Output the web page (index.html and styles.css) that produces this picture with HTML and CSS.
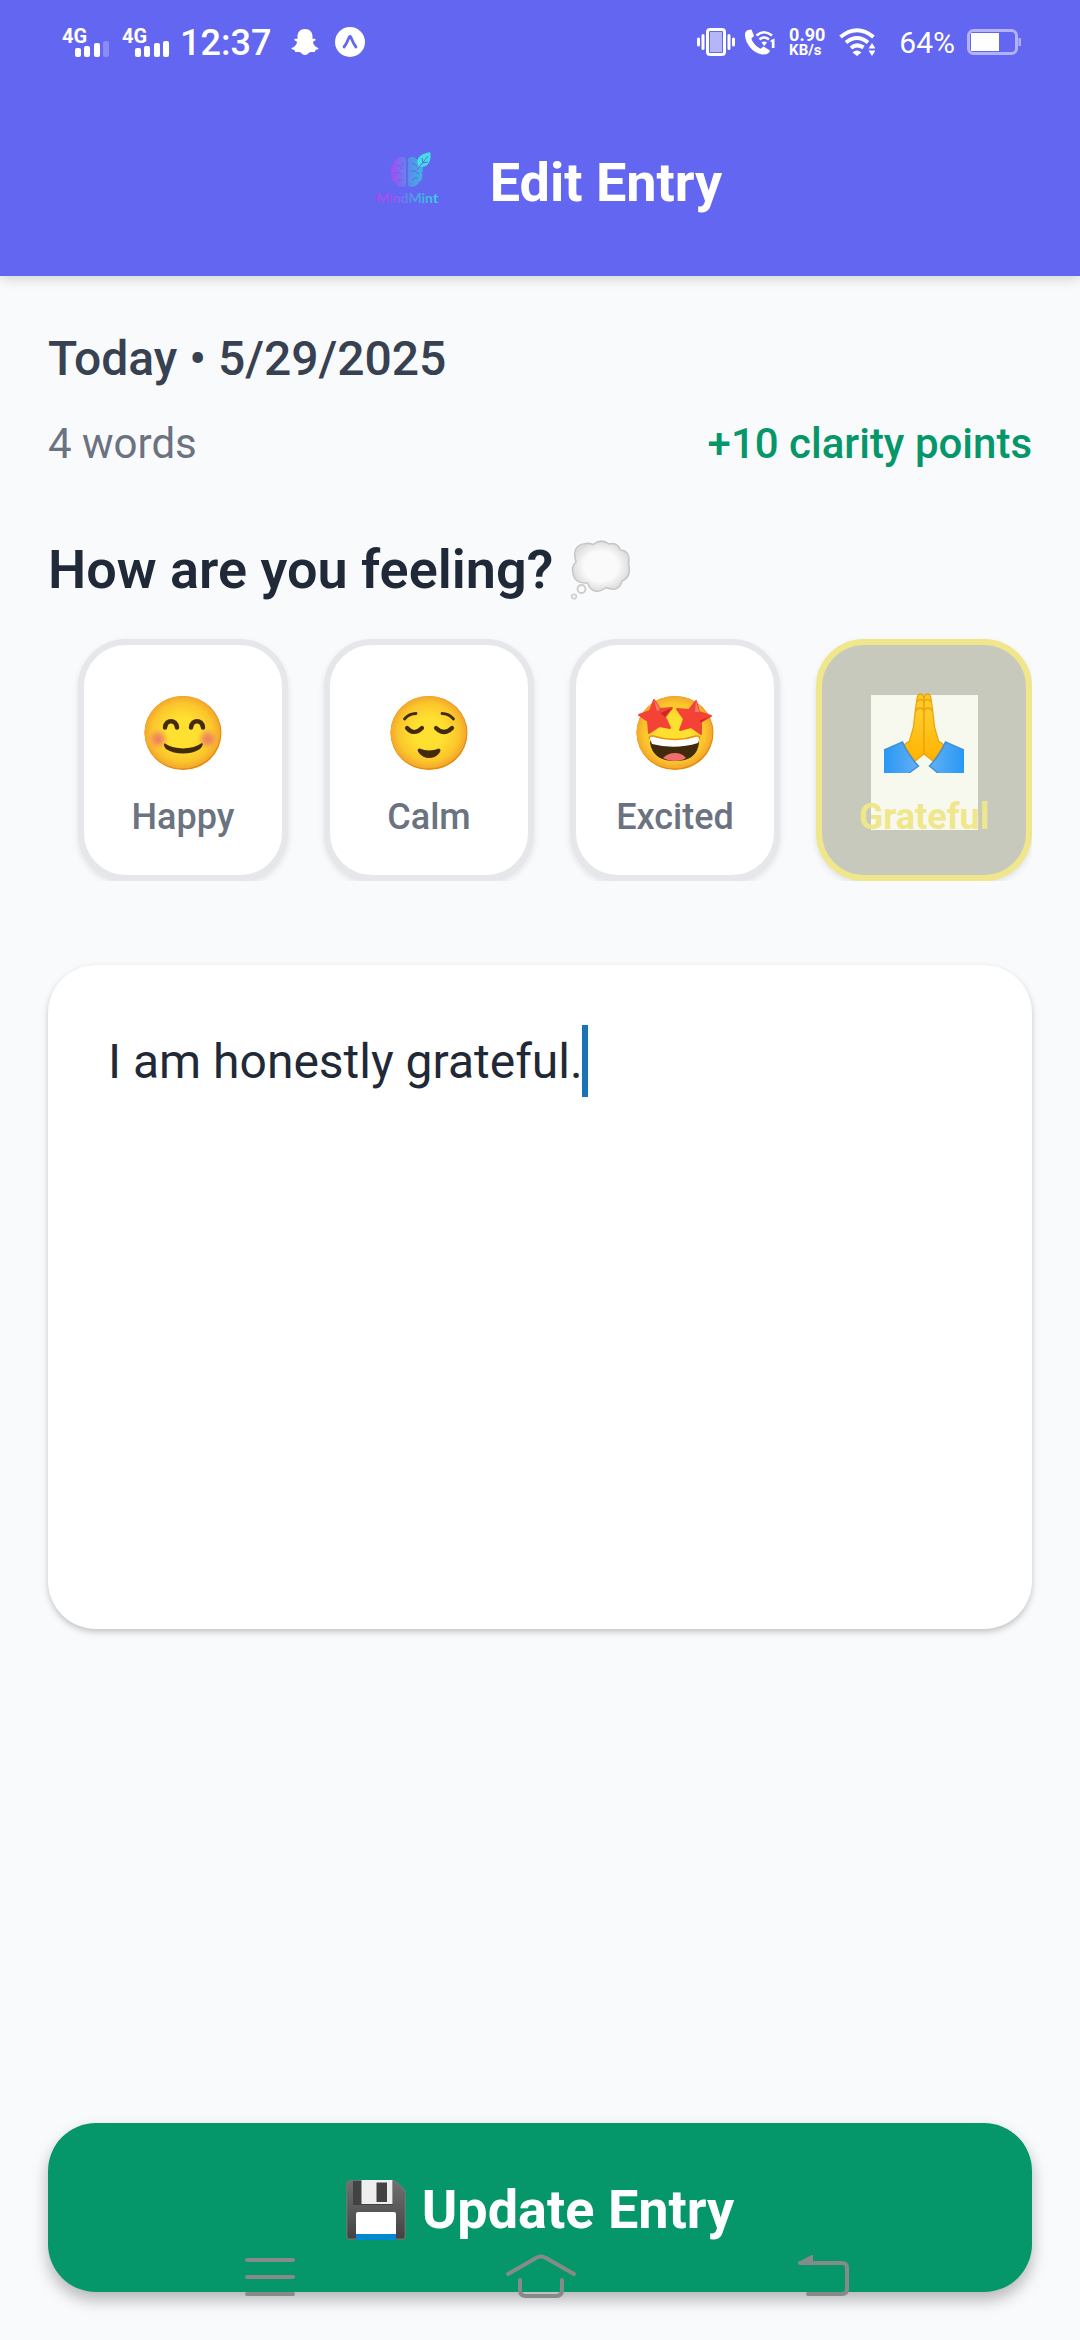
FILE: index.html
```html
<!DOCTYPE html>
<html lang="en">
<head>
<meta charset="utf-8">
<meta name="viewport" content="width=device-width, initial-scale=1">
<title>Edit Entry</title>
<link rel="stylesheet" href="styles.css">
</head>
<body>
<header class="header">
  <div class="status">
    <div class="status-group">
      <div class="signal">
        <span class="signal-label">4G</span>
        <svg class="signal-bars" viewBox="0 0 34 16" aria-hidden="true"><g fill="#fff"><rect x="0" y="7" width="6" height="9" rx="2"/><rect x="9" y="5" width="6" height="11" rx="2"/><rect x="19" y="2" width="6" height="14" rx="2"/><rect x="28" y="0" width="6" height="16" rx="2" opacity=".25"/></g></svg>
      </div>
      <div class="signal">
        <span class="signal-label">4G</span>
        <svg class="signal-bars" viewBox="0 0 34 16" aria-hidden="true"><g fill="#fff"><rect x="0" y="7" width="6" height="9" rx="2"/><rect x="9" y="5" width="6" height="11" rx="2"/><rect x="19" y="2" width="6" height="14" rx="2"/><rect x="28" y="0" width="6" height="16" rx="2"/></g></svg>
      </div>
      <span class="clock">12:37</span>
      <svg class="icon-snap" viewBox="0 0 28 28" aria-hidden="true"><path fill="#fff" d="M14 1C9 1 6.500 4.500 6.500 8.500V11C5.500 11 4 10.500 3.500 11.200 3 12.300 5 13 6 13.700 6 16.500 3.500 19 .8 20 0 20.500.5 21.200 3.500 22L4.200 24C6 24 8 23.600 9.500 24.500 11 25.500 12 27 14 27s3-1.500 4.500-2.500C20 23.600 22 24 23.800 24L24.500 22C27.500 21.200 28 20.500 27.200 20 24.500 19 22 16.500 22 13.700 23 13 25 12.300 24.500 11.200 24 10.500 22.500 11 21.500 11V8.500C21.500 4.500 19 1 14 1Z"/></svg>
      <svg class="icon-app" viewBox="0 0 30 30" aria-hidden="true"><circle cx="15" cy="15" r="15" fill="#fff"/><path d="M9 20C11.500 17 13 13 14 10.500Q15 8.500 16 10.500C17 13 18.500 17 21 20" fill="none" stroke="#6366f1" stroke-width="2.800" stroke-linecap="round"/></svg>
    </div>
    <div class="status-group">
      <svg class="icon-vibrate" viewBox="0 0 38 28" aria-hidden="true"><rect x="10.500" y="1.500" width="17" height="25" rx="2.500" fill="#6366f1" stroke="#fff" stroke-width="3"/><rect x="13" y="4" width="12" height="20" fill="#b5b6f8"/><path d="M1.500 11v6M6 7.500v13M32 7.500v13M36.500 11v6" stroke="#fff" stroke-width="3" stroke-linecap="round"/></svg>
      <svg class="icon-call" viewBox="0 0 30 26" aria-hidden="true"><path fill="#fff" d="M3 1 6.500.5 9 7 6.300 9.500C8 14 11 17.500 15.500 19.800L18.500 17.500 25 21.500C24.500 24 22 25.500 19 25.500 9 25.500 0 15 0 5.500 0 3 1.500 1.500 3 1Z"/><path d="M11.500 6.500Q19 0 27 6.500M14.500 10.500Q19 6.500 24 10.500" fill="none" stroke="#fff" stroke-width="2.600"/><path d="M16.500 13.500Q19 11.500 22 13.500L19.200 17ZM26 11 29.500 9.500V19H26.800V12.500L25 13Z" fill="#fff"/></svg>
      <div class="speed"><span class="speed-value">0.90</span><span class="speed-unit">KB/s</span></div>
      <svg class="icon-wifi" viewBox="0 0 36 28" aria-hidden="true"><path d="M1.500 9Q18-4.500 34.500 9M7 14.500Q18 5.500 29 14.500M12 20Q18 15 24.500 19.500" fill="none" stroke="#fff" stroke-width="4"/><path d="M13.500 24.500Q18 20.500 22.500 24.500L18 28ZM29.500 20.500 33 15l3.500 5.500ZM29.500 22.500H36.500L33 28Z" fill="#fff"/></svg>
      <span class="percent">64%</span>
      <svg class="icon-battery" viewBox="0 0 54 26" aria-hidden="true"><rect x="1.500" y="1.500" width="48" height="23" rx="5" fill="none" stroke="#b1b2f8" stroke-width="3"/><rect x="4" y="4" width="28" height="18" fill="#fff"/><path d="M51.500 9h1.500q1 0 1 1v6q0 1-1 1h-1.500Z" fill="#b1b2f8"/></svg>
    </div>
  </div>
  <div class="title-row">
    <svg class="logo" viewBox="0 0 90 64" role="img" aria-label="MindMint">
      <defs><linearGradient id="mint" gradientUnits="userSpaceOnUse" x1="14" y1="0" x2="76" y2="0"><stop offset="0" stop-color="#a94be8"/><stop offset=".3" stop-color="#9a55f5"/><stop offset=".52" stop-color="#5b8ce8"/><stop offset=".75" stop-color="#3fb3e0"/><stop offset="1" stop-color="#41d3e0"/></linearGradient></defs>
      <path fill="url(#mint)" d="M44 8C42 5 37 5 36 8 32 8 31 11 32 13 28 15 28 20 30 22 28 26 30 30 33 31 34 35 42 38 44 34ZM46 8C48 5 53 5 54 8 58 8 59 11 58 13 62 15 61 20 60 22 61 26 60 30 57 31 56 35 48 38 46 34Z"/>
      <path d="M35 14q4 0 4 4M32 22q5-2 8 2M35 30q3-3 6 0M41 11v4M50 12q4 1 5 4M49 20q5-1 8 3M50 29q3-3 6-2" fill="none" stroke="#6366f1" stroke-width="1"/>
      <path fill="#44dfe3" d="M57 16C52 6 60 3 68 1 70 8 67 17 58 16Z"/>
      <path d="M55 19 66 5M60 7l1 5M66 11l-6 1" fill="none" stroke="#6366f1" stroke-width="1"/>
      <text class="logo-text" x="14" y="52" fill="url(#mint)">MindMint</text>
    </svg>
    <h1 class="title">Edit Entry</h1>
  </div>
</header>

<main class="content">
  <h2 class="date">Today • 5/29/2025</h2>
  <div class="stats">
    <span>4 words</span>
    <span class="points">+10 clarity points</span>
  </div>

  <h2 class="question">How are you feeling?
    <svg class="bubble" viewBox="0 0 60 60" aria-hidden="true"><defs><radialGradient id="cloud"><stop offset=".6" stop-color="#fafafa"/><stop offset="1" stop-color="#dedede"/></radialGradient></defs><path d="M22 4.500Q30-2 38 4Q46 1.500 49.500 10Q60 11 57.500 24Q61 37 51 41Q48 53 35 47.500Q22 57 16.500 43Q2 44 1.500 30Q1.500 25 5 22Q0 5 15 3.500Q19 3 22 4.500Z" fill="url(#cloud)" stroke="#c6c6c6" stroke-width="1.500"/><circle cx="10.500" cy="49" r="4" fill="#fafafa" stroke="#ccc" stroke-width="1.800"/><circle cx="3" cy="56.500" r="2.300" fill="#fafafa" stroke="#ccc" stroke-width="1.600"/></svg>
  </h2>

  <svg class="defs" aria-hidden="true"><defs>
    <radialGradient id="face" cx=".5" cy=".5" r=".5"><stop offset=".4" stop-color="#ffe030"/><stop offset=".8" stop-color="#fbc62c"/><stop offset="1" stop-color="#f3a72b"/></radialGradient>
    <radialGradient id="blush"><stop offset="0" stop-color="#ef7d62"/><stop offset=".4" stop-color="#f08c5c" stop-opacity=".85"/><stop offset="1" stop-color="#f7a94a" stop-opacity="0"/></radialGradient>
  </defs></svg>
  <div class="moods" role="group" aria-label="Mood">
    <button class="mood" type="button" aria-pressed="false">
      <svg class="emoji" viewBox="0 0 80 80" aria-hidden="true"><ellipse cx="40" cy="40" rx="38.500" ry="37" fill="#e68a0c"/><ellipse cx="39.500" cy="39.300" rx="38" ry="36.300" fill="url(#face)"/><circle cx="15" cy="46" r="11" fill="url(#blush)"/><circle cx="65" cy="46" r="11" fill="url(#blush)"/><path d="M22 34.500C23 26 33 26 34 34.500M48 34.500C49 26 59 26 60 34.500" fill="none" stroke="#422b0d" stroke-width="4.500" stroke-linecap="round"/><path d="M22 50.500C32 57 48 57 58 50.500 61 49.500 60 53 57 56 48 62 32 62 23 56 20 52 21 50 22 50.500Z" fill="#422b0d"/></svg>
      <span>Happy</span>
    </button>
    <button class="mood" type="button" aria-pressed="false">
      <svg class="emoji" viewBox="0 0 80 80" aria-hidden="true"><ellipse cx="40" cy="40" rx="38.500" ry="37" fill="#e68a0c"/><ellipse cx="39.500" cy="39.300" rx="38" ry="36.300" fill="url(#face)"/><path d="M15.500 26Q20 20.500 27 20.500M53 20.500Q60 20.500 64.500 26" fill="none" stroke="#422b0d" stroke-width="2.800" stroke-linecap="round"/><path d="M18 35Q25 43 33 35M47 35Q55 43 63 35" fill="none" stroke="#422b0d" stroke-width="4.200" stroke-linecap="round"/><path d="M30.500 55.500Q40 59.500 50 55.500 53 56.500 50 60.500 46 65 40 65 34 65 30 60 27 56 30.500 55.500Z" fill="#422b0d"/></svg>
      <span>Calm</span>
    </button>
    <button class="mood" type="button" aria-pressed="false">
      <svg class="emoji" viewBox="0 0 80 80" aria-hidden="true"><ellipse cx="40" cy="40" rx="38.500" ry="37" fill="#e68a0c"/><ellipse cx="39.500" cy="39.300" rx="38" ry="36.300" fill="url(#face)"/><path d="M16 45.500Q40 52 63 45.500L64 50Q62 68 40 68 18 68 15 50Z" fill="#422b0d"/><path d="M15 46Q14 43 18 43.500 40 51 61 43.500 65 43 64 47L63 50Q40 57 17 51Z" fill="#fff"/><path d="M28 65Q33 60 40 60T51 65Q47 68 40 68T28 65Z" fill="#ee6f6b"/><path d="M14.500 46Q13.500 42.500 18 43 40 50 61 43 65.500 42.500 64.500 46.500" fill="none" stroke="#e89218" stroke-width="1.500"/><path d="M19 7 25 16 37 15 30 24 35 35 24.500 33 14 40 13 28 4 22 15 18ZM61 8 64 19 76 23 66 29 66 41 56 34 45 37 49 26 42 16 54 17Z" fill="#f44336" stroke="#f44336" stroke-width="2" stroke-linejoin="round"/><path d="M37 15 25.500 20 30 24ZM76 23 64 28 66 29Z" fill="#c62828"/><path d="M19 7 25 16 22 18ZM61 8 64 19 60 19Z" fill="#f9806f"/></svg>
      <span>Excited</span>
    </button>
    <button class="mood mood-selected" type="button" aria-pressed="true">
      <svg class="emoji" viewBox="0 0 80 80" aria-hidden="true"><defs><linearGradient id="hand" x1="0" y1="0" x2="0" y2="1"><stop offset=".3" stop-color="#ffca28"/><stop offset="1" stop-color="#ffb300"/></linearGradient><linearGradient id="cuff"><stop offset="0" stop-color="#2898f5"/><stop offset="1" stop-color="#64b0f5"/></linearGradient><linearGradient id="cuff2"><stop offset="0" stop-color="#64b0f5"/><stop offset="1" stop-color="#2898f5"/></linearGradient></defs><g fill="url(#hand)" stroke="#eaa50b" stroke-width="1.300"><path d="M40 5Q39 1 36.500 1 33.500 1 33 6L31.500 16 29.500 34 25.500 48 20 52 31 68 40 61Z"/><path d="M40 5Q41 1 43.500 1 46.500 1 47 6L48.500 16 50.500 34 54.500 48 60 52 49 68 40 61Z"/><path d="M33 9q1-2.500 3.500-2.500T40 9q1-2.500 3.500-2.500T47 9M32 18q1-3 4-3t4 3q1-3 4-3t4 3" fill="none"/></g><path d="M0 57 18.500 49Q24 62 34.500 73L25 80H0Z" fill="url(#cuff)"/><path d="M80 57 61.500 49Q56 62 45.500 73L54 80H80Z" fill="url(#cuff2)"/><path d="M0 57 18.500 49Q24 62 34.500 73L25 80M80 57 61.500 49Q56 62 45.500 73L54 80" fill="none" stroke="#3e8fd6" stroke-width="1.500"/></svg>
      <span>Grateful</span>
    </button>
  </div>

  <div class="editor">
    <textarea class="entry" aria-label="Journal entry">I am honestly grateful.</textarea>
    <span class="cursor"></span>
  </div>

  <button class="update" type="button">
    <svg class="floppy" viewBox="0 0 60 60" aria-hidden="true"><defs><linearGradient id="disk" x1="0" y1="0" x2="0" y2="1"><stop offset="0" stop-color="#707070"/><stop offset="1" stop-color="#424242"/></linearGradient></defs><path d="M4 .8H49L59.200 11V56Q59.200 59.200 56 59.200H4Q.8 59.200.8 56V4Q.8.8 4 .8Z" fill="url(#disk)" stroke="#757575" stroke-width="1.200"/><path d="M7 1H47V25H7Z" fill="#424242"/><path d="M15.500 0H46.500V24H15.500Z" fill="#eee"/><path d="M30.500 2.500H41V22H30.500Z" fill="#424242"/><path d="M10 34Q10 32 12 32H48Q50 32 50 34V54H10Z" fill="#fff"/><path d="M10 54H50V60H10Z" fill="#0288d1"/></svg>
    <span>Update Entry</span>
  </button>
</main>

<nav class="navbar" aria-label="System">
  <button class="nav-key" type="button" aria-label="Recent apps"><svg viewBox="0 0 80 48"><path d="M17 9H63M17 26H63M17 43H63"/></svg></button>
  <button class="nav-key" type="button" aria-label="Home"><svg viewBox="0 0 80 48"><path d="M8 23 36 7Q41 4 46 7L74 23M20 29V39Q20 45 26 45H56Q62 45 62 39V29"/></svg></button>
  <button class="nav-key" type="button" aria-label="Back"><svg viewBox="0 0 80 48"><path d="M30 12H72Q77 12 77 17V38Q77 43 72 43H38"/><path class="nav-fill" d="M29 12 42 5V12Z"/></svg></button>
</nav>
</body>
</html>
```
FILE: styles.css
```css
* {
  box-sizing: border-box;
}

body {
  margin: 0;
  min-height: 100vh;
  display: flex;
  flex-direction: column;
  background: #f9fafc;
  color: #1f2937;
  font-family: Roboto, "Liberation Sans", sans-serif;
}

button {
  border: 0;
  font: inherit;
  cursor: pointer;
}

h1,
h2 {
  margin: 0;
}

svg {
  display: block;
  flex: none;
}

/* Header */
.header {
  background: #6366f1;
  color: #fff;
  padding-bottom: 61px;
  box-shadow: 0 2px 12px rgba(0, 0, 0, 0.18);
}

.status {
  height: 84px;
  padding: 0 59px 0 62px;
  display: flex;
  align-items: center;
  justify-content: space-between;
}

.status-group {
  display: flex;
  align-items: center;
}

.signal {
  position: relative;
  width: 47px;
  height: 30px;
  margin-right: 13px;
}

.signal-label {
  display: block;
  font-size: 20px;
  line-height: 18px;
  font-weight: 700;
}

.signal-bars {
  position: absolute;
  right: 0;
  bottom: 0;
  width: 34px;
  height: 16px;
}

.clock {
  margin-left: -2px;
  padding-top: 2px;
  font-size: 36px;
  line-height: 42px;
  font-weight: 500;
}

.icon-snap {
  width: 28px;
  height: 28px;
  margin-left: 20px;
}

.icon-app {
  width: 30px;
  height: 30px;
  margin-left: 16px;
}

.icon-vibrate {
  width: 38px;
  height: 28px;
}

.icon-call {
  width: 30px;
  height: 26px;
  margin-left: 10px;
}

.speed {
  display: flex;
  flex-direction: column;
  margin-left: 14px;
  font-weight: 700;
}

.speed-value {
  font-size: 18px;
  line-height: 16px;
}

.speed-unit {
  font-size: 15px;
  line-height: 14px;
}

.icon-wifi {
  width: 36px;
  height: 28px;
  margin-left: 14px;
}

.percent {
  padding-top: 1px;
  margin-left: 24px;
  font-size: 30px;
  line-height: 36px;
}

.icon-battery {
  width: 54px;
  height: 26px;
  margin-left: 12px;
}

.title-row {
  margin-top: 67px;
  padding-left: 4px;
  display: flex;
  align-items: center;
  justify-content: center;
  gap: 38px;
}

.logo {
  width: 90px;
  height: 64px;
}

.logo-text {
  font-family: Lato, sans-serif;
  font-size: 14px;
  font-weight: 700;
}

.title {
  font-size: 54px;
  line-height: 64px;
  font-weight: 700;
}

/* Content */
.content {
  flex: 1;
  display: flex;
  flex-direction: column;
  padding: 55px 48px 48px;
}

.date {
  font-size: 48px;
  line-height: 56px;
  font-weight: 500;
  color: #374151;
}

.stats {
  margin-top: 32px;
  display: flex;
  justify-content: space-between;
  font-size: 42px;
  line-height: 50px;
  color: #6b7280;
}

.points {
  font-weight: 500;
  color: #059669;
}

.question {
  margin-top: 69px;
  display: flex;
  align-items: center;
  gap: 18px;
  font-size: 54px;
  line-height: 64px;
  font-weight: 600;
}

.bubble {
  width: 60px;
  height: 60px;
}

.defs {
  width: 0;
  height: 0;
}

.moods {
  margin-top: 5px;
  padding: 32px 0 0 30px;
  display: flex;
  gap: 36px;
  overflow: hidden;
}

.mood {
  min-width: 210px;
  padding: 48px 36px 37px;
  display: flex;
  flex-direction: column;
  align-items: center;
  gap: 23px;
  border: 6px solid #e5e7eb;
  border-radius: 48px;
  background: #fff;
  color: #6b7280;
  font-size: 36px;
  line-height: 42px;
  font-weight: 500;
  box-shadow: 0 3px 6px rgba(0, 0, 0, 0.1);
}

.mood-selected {
  flex: 1;
  border-color: #f0e68c;
  background:
    linear-gradient(#f7f9ee, #f7f9ee) center 50px / 107px 135px no-repeat,
    #c8c9bd;
  color: #f0e68c;
  font-weight: 700;
}

.emoji {
  width: 80px;
  height: 80px;
}

.editor {
  position: relative;
  margin-top: 84px;
}

.entry {
  display: block;
  width: 100%;
  height: 664px;
  padding: 61px 60px 60px;
  border: 0;
  border-radius: 48px;
  outline: 0;
  resize: none;
  background: #fff;
  color: #1f2937;
  font: 400 48px/72px Roboto, "Liberation Sans", sans-serif;
  caret-color: transparent;
  box-shadow: 0 3px 6px rgba(0, 0, 0, 0.22);
}

.cursor {
  position: absolute;
  left: 534px;
  top: 60px;
  width: 6px;
  height: 72px;
  background: #1a73b5;
}

.update {
  margin-top: auto;
  padding: 55px 48px 50px;
  display: flex;
  align-items: center;
  justify-content: center;
  gap: 16px;
  border-radius: 48px;
  background: #059669;
  color: #fff;
  font-size: 54px;
  line-height: 64px;
  font-weight: 700;
  box-shadow: 0 8px 16px rgba(0, 0, 0, 0.28);
}

.floppy {
  width: 60px;
  height: 60px;
}

/* System keys, drawn over the bottom of the page */
.navbar {
  position: fixed;
  left: 0;
  right: 0;
  bottom: 0;
  padding: 0 12.5% 41px;
  display: grid;
  grid-template-columns: repeat(3, 1fr);
  justify-items: center;
}

.nav-key {
  padding: 0;
  background: none;
}

.nav-key svg {
  width: 80px;
  height: 48px;
  fill: none;
  stroke: #868b88;
  stroke-width: 4;
  stroke-linecap: round;
  stroke-linejoin: round;
}

.nav-key .nav-fill {
  fill: #868b88;
  stroke-width: 2;
}
```
